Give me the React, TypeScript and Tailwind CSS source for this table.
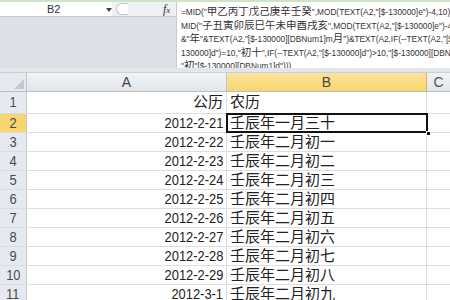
import React from 'react'

const rows: [string, string, string][] = [
  ['1', '公历', '农历'],
  ['2', '2012-2-21', '壬辰年一月三十'],
  ['3', '2012-2-22', '壬辰年二月初一'],
  ['4', '2012-2-23', '壬辰年二月初二'],
  ['5', '2012-2-24', '壬辰年二月初三'],
  ['6', '2012-2-25', '壬辰年二月初四'],
  ['7', '2012-2-26', '壬辰年二月初五'],
  ['8', '2012-2-27', '壬辰年二月初六'],
  ['9', '2012-2-28', '壬辰年二月初七'],
  ['10', '2012-2-29', '壬辰年二月初八'],
  ['11', '2012-3-1', '壬辰年二月初九'],
]

const formula = [
  '=MID("甲乙丙丁戊己庚辛壬癸",MOD(TEXT(A2,"[$-130000]e")-4,10)+',
  'MID("子丑寅卯辰巳午未申酉戌亥",MOD(TEXT(A2,"[$-130000]e")-4,12)+1,1)',
  '&"年"&TEXT(A2,"[$-130000][DBNum1]m月")&TEXT(A2,IF(--TEXT(A2,"[$-',
  '130000]d")=10,"初十",IF(--TEXT(A2,"[$-130000]d")>10,"[$-130000][DBNum1]",',
  '"初"[$-130000][DBNum1]d")))',
]

const cellFont = "font-['Liberation_Sans','Noto_Sans_CJK_SC',sans-serif]"

// CJK glyphs are drawn larger than the latin part in the formula bar
function FormulaLine({ text }: { text: string }) {
  const parts = text.split(/([\u4e00-\u9fff]+)/)
  return (
    <div className="h-[13.5px] leading-[13.5px] text-[8.3px] whitespace-nowrap text-[#333]">
      {parts.map((p, i) =>
        /[\u4e00-\u9fff]/.test(p) ? (
          <span key={i} className="text-[10.5px]">
            {p}
          </span>
        ) : (
          <span key={i}>{p}</span>
        ),
      )}
    </div>
  )
}

function Narrow({ children }: { children: React.ReactNode }) {
  return <span className="inline-block scale-x-[0.86] origin-right">{children}</span>
}

export default function App() {
  return (
    <div className={`w-[450px] h-[300px] overflow-hidden bg-white text-[#222] ${cellFont}`}>
      {/* formula bar */}
      <div className="h-[2px] bg-[#cfe3c8]" />
      <div className="flex h-[66px] bg-[#dde1e6]">
        <div className="w-[176px] flex flex-col">
          <div className="flex h-[15px] items-center border-b border-[#c6cbd2]">
            <div className="w-[112px] h-full bg-white relative">
              <span className="absolute left-[47px] top-0 leading-[15px] text-[11px] text-[#333]">B2</span>
              <span className="absolute left-[106px] top-[6px] w-0 h-0 border-l-[3px] border-r-[3px] border-t-[4px] border-l-transparent border-r-transparent border-t-[#444]" />
            </div>
            <div className="flex-1 h-full bg-[#eef0f3] flex items-center pl-[4px] relative">
              <span className="w-[12px] h-[12px] rounded-l-full border border-r-0 border-[#c0c5cc] bg-white" />
              <span className="absolute left-[51px] top-0 leading-[14px] text-[12px] italic font-['Liberation_Serif',serif] text-[#333]">
                f<span className="text-[9px]">x</span>
              </span>
            </div>
          </div>
          <div className="flex-1" />
        </div>
        <div className="flex-1 bg-white border-l border-[#c6cbd2] pl-[4px] pt-[3px] overflow-hidden">
          {formula.map((l, i) => (
            <FormulaLine key={i} text={l} />
          ))}
        </div>
      </div>
      <div className="h-[5px] bg-[#e3e6ea] border-b border-[#cdd1d6]" />

      {/* column headers */}
      <div className="flex h-[19px] border-b border-[#b9bec6]">
        <div className="w-[27px] bg-[#e6eaef] border-r border-[#c3c8cf] relative">
          <span className="absolute right-[2px] bottom-[2px] w-0 h-0 border-b-[10px] border-l-[10px] border-l-transparent border-b-[#c4c9d1]" />
        </div>
        <div className="w-[200px] bg-gradient-to-b from-[#f1f3f6] to-[#e2e6eb] border-r border-[#c3c8cf] flex items-center justify-center text-[14px] text-[#444]">
          A
        </div>
        <div className="w-[200px] bg-gradient-to-b from-[#fbe39a] to-[#f8d56e] border-r border-[#d9b75a] flex items-center justify-center text-[14px] text-[#444]">
          B
        </div>
        <div className="flex-1 bg-gradient-to-b from-[#f1f3f6] to-[#e2e6eb] flex items-center justify-center text-[14px] text-[#555]">
          C
        </div>
      </div>

      {/* rows */}
      {rows.map(([n, a, b]) => {
        const sel = n === '2'
        const first = n === '1'
        return (
          <div key={n} className={`flex border-b border-[#dadde2] ${first ? 'h-[22px]' : 'h-[19px]'}`}>
            <div
              className={`w-[27px] border-r border-[#c3c8cf] flex items-center justify-center text-[15px] text-[#4a4a4a] ${
                sel ? 'bg-[#f8d56e]' : 'bg-[#e6eaf0]'
              }`}
            >
              <span className="inline-block scale-x-[0.86]">{n}</span>
            </div>
            <div className="w-[200px] border-r border-[#dadde2] flex items-center justify-end pr-[3px] text-[15px]">
              {first ? a : <Narrow>{a}</Narrow>}
            </div>
            <div
              className={`w-[200px] flex items-center pl-[3px] text-[15px] relative ${
                sel ? 'outline-2 outline-[#111] -outline-offset-1' : 'border-r border-[#dadde2]'
              }`}
            >
              {b}
              {sel && <span className="absolute right-[-4px] bottom-[-4px] w-[5px] h-[5px] bg-[#111] border border-white" />}
            </div>
            <div className="flex-1" />
          </div>
        )
      })}
    </div>
  )
}
